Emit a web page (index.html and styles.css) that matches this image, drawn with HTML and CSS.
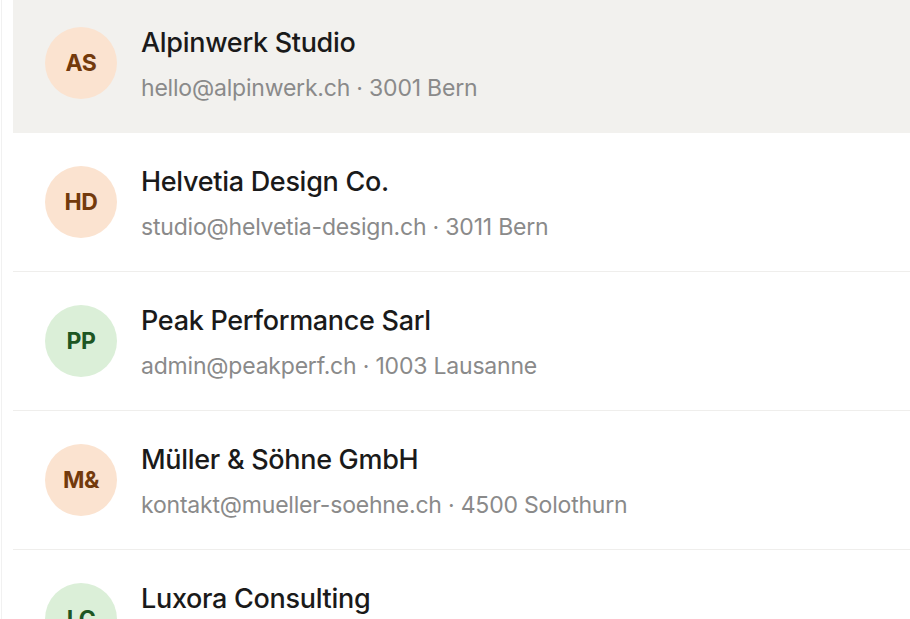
FILE: index.html
```html
<!DOCTYPE html>
<html lang="de">
<head>
<meta charset="utf-8">
<link rel="stylesheet" href="styles.css">
</head>
<body>
<div class="panel">
  <ul class="list">
    <li class="row active">
      <div class="avatar peach">AS</div>
      <div class="info">
        <div class="name">Alpinwerk Studio</div>
        <div class="meta">hello@alpinwerk.ch · 3001 Bern</div>
      </div>
    </li>
    <li class="row">
      <div class="avatar peach">HD</div>
      <div class="info">
        <div class="name">Helvetia Design Co.</div>
        <div class="meta">studio@helvetia-design.ch · 3011 Bern</div>
      </div>
    </li>
    <li class="row">
      <div class="avatar green">PP</div>
      <div class="info">
        <div class="name">Peak Performance Sarl</div>
        <div class="meta">admin@peakperf.ch · 1003 Lausanne</div>
      </div>
    </li>
    <li class="row">
      <div class="avatar peach">M&amp;</div>
      <div class="info">
        <div class="name">Müller &amp; Söhne GmbH</div>
        <div class="meta">kontakt@mueller-soehne.ch · 4500 Solothurn</div>
      </div>
    </li>
    <li class="row">
      <div class="avatar green">LC</div>
      <div class="info">
        <div class="name">Luxora Consulting</div>
        <div class="meta">info@luxora.ch · 8001 Zürich</div>
      </div>
    </li>
  </ul>
</div>
</body>
</html>
```

FILE: styles.css
```css
html, body {
  margin: 0;
  padding: 0;
  background: #ffffff;
  overflow: hidden;
  height: 619px;
}
body {
  font-family: Inter, "Noto Sans", sans-serif;
}
.panel {
  margin-left: 1px;
  border-left: 1px solid #f1f1f1;
  padding-left: 11px;
  height: 619px;
  overflow: hidden;
}
.list {
  list-style: none;
  margin: -6px 0 0 0;
  padding: 0;
}
.row {
  display: flex;
  align-items: center;
  gap: 24px;
  height: 138px;
  padding-left: 32px;
  border-bottom: 1px solid #efeeec;
}
.row.active {
  background: #f2f1ee;
  border-bottom-color: #f2f1ee;
}
.avatar {
  flex: none;
  width: 72px;
  height: 72px;
  border-radius: 50%;
  display: flex;
  align-items: center;
  justify-content: center;
  font-weight: 700;
  font-size: 23px;
  letter-spacing: -0.5px;
}
.avatar.peach {
  background: #fbe3d0;
  color: #733a0c;
}
.avatar.green {
  background: #dbefd8;
  color: #1d5623;
}
.info {
  display: flex;
  flex-direction: column;
  gap: 15px;
  padding-top: 3px;
}
.name {
  font-size: 27px;
  font-weight: 500;
  color: #1a1a1a;
  letter-spacing: -0.3px;
  line-height: 32px;
}
.meta {
  font-size: 23px;
  color: #8a8a8a;
  letter-spacing: -0.2px;
  line-height: 28px;
}
```
